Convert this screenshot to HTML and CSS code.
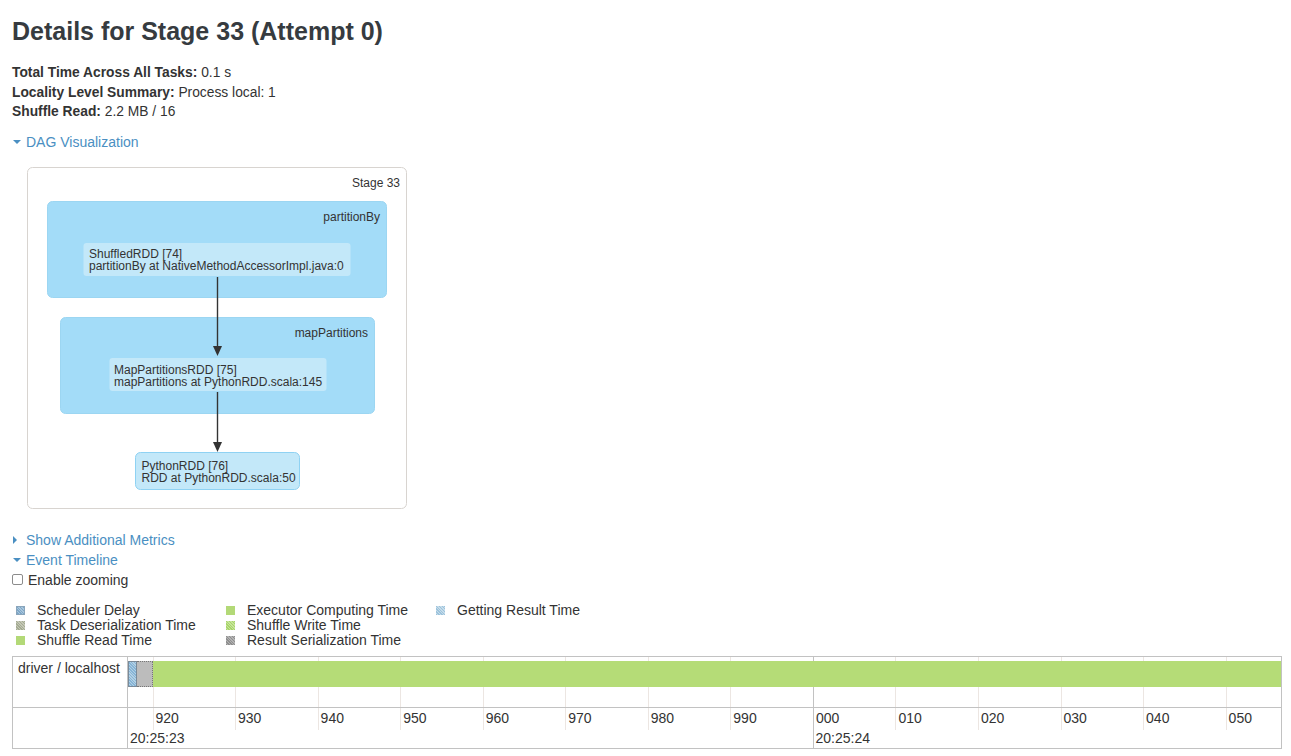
FILE: index.html
```html
<!DOCTYPE html>
<html>
<head>
<meta charset="utf-8">
<title>Stage 33</title>
<link rel="stylesheet" href="styles.css">
</head>
<body>
<h3 class="title">Details for Stage 33 (Attempt 0)</h3>
<ul class="summary">
  <li><strong>Total Time Across All Tasks:</strong> 0.1 s</li>
  <li><strong>Locality Level Summary:</strong> Process local: 1</li>
  <li><strong>Shuffle Read:</strong> 2.2 MB / 16</li>
</ul>
<div class="toggle dag-toggle"><span class="tri-down big"></span><span class="link">DAG Visualization</span></div>
<svg class="dag" width="400" height="360" viewBox="0 0 400 360">
  <rect x="7.5" y="7.5" width="379" height="341" rx="5" fill="#ffffff" stroke="#d8d4d0"/>
  <text x="380" y="27" text-anchor="end">Stage 33</text>
  <rect x="27.5" y="41.5" width="339" height="96" rx="5" fill="#a3dcf8" stroke="#9cd6f2"/>
  <text x="360" y="61" text-anchor="end">partitionBy</text>
  <rect x="63.5" y="83" width="267" height="33" rx="3" fill="#c3e8f9"/>
  <text x="69" y="98">ShuffledRDD [74]</text>
  <text x="69" y="110">partitionBy at NativeMethodAccessorImpl.java:0</text>
  <rect x="40.5" y="157.5" width="314" height="96" rx="5" fill="#a3dcf8" stroke="#9cd6f2"/>
  <text x="348" y="177" text-anchor="end">mapPartitions</text>
  <rect x="89.5" y="198" width="217" height="33" rx="3" fill="#c3e8f9"/>
  <text x="94" y="214">MapPartitionsRDD [75]</text>
  <text x="94" y="226">mapPartitions at PythonRDD.scala:145</text>
  <rect x="115.5" y="292.5" width="164" height="37" rx="5" fill="#c3e8f9" stroke="#8fd2f3"/>
  <text x="121.5" y="310">PythonRDD [76]</text>
  <text x="121.5" y="322">RDD at PythonRDD.scala:50</text>
  <line x1="197.5" y1="117" x2="197.5" y2="188" stroke="#333" stroke-width="1.4"/>
  <path d="M193 186 L202 186 L197.5 196 Z" fill="#333"/>
  <line x1="197.5" y1="232" x2="197.5" y2="284" stroke="#333" stroke-width="1.4"/>
  <path d="M193 282 L202 282 L197.5 292 Z" fill="#333"/>
</svg>
<div class="toggle metrics-toggle"><span class="tri-right"></span><span class="link">Show Additional Metrics</span></div>
<div class="toggle"><span class="tri-down"></span><span class="link">Event Timeline</span></div>
<label class="zoom"><span class="checkbox"></span>Enable zooming</label>
<div class="legend">
  <div class="item"><span class="sw sched"></span>Scheduler Delay</div>
  <div class="item"><span class="sw deser"></span>Task Deserialization Time</div>
  <div class="item"><span class="sw sread"></span>Shuffle Read Time</div>
  <div class="item"><span class="sw exec"></span>Executor Computing Time</div>
  <div class="item"><span class="sw swrite"></span>Shuffle Write Time</div>
  <div class="item"><span class="sw rser"></span>Result Serialization Time</div>
  <div class="item"><span class="sw getres"></span>Getting Result Time</div>
</div>
<div class="timeline">
  <div class="tl-row tl-top">
    <div class="tl-label">driver / localhost</div>
    <div class="tl-area">
      <div class="grid">
        <div class="gc first"></div>
        <div class="gc"></div><div class="gc"></div><div class="gc"></div><div class="gc"></div>
        <div class="gc"></div><div class="gc"></div><div class="gc"></div><div class="gc"></div>
        <div class="gc major"></div><div class="gc"></div><div class="gc"></div><div class="gc"></div>
        <div class="gc"></div>
        <div class="gc last"></div>
      </div>
      <div class="bar"><span class="seg-sched"></span><span class="seg-deser"></span><span class="seg-exec"></span></div>
    </div>
  </div>
  <div class="tl-row tl-axis">
    <div class="tl-label"></div>
    <div class="tl-area">
      <div class="grid minor">
        <div class="gc first"></div>
        <div class="gc">920</div><div class="gc">930</div><div class="gc">940</div><div class="gc">950</div>
        <div class="gc">960</div><div class="gc">970</div><div class="gc">980</div><div class="gc">990</div>
        <div class="gc major">000</div><div class="gc">010</div><div class="gc">020</div><div class="gc">030</div>
        <div class="gc">040</div>
        <div class="gc last">050</div>
      </div>
      <div class="major-row">
        <div class="mj first">20:25:23</div>
        <div class="mj second">20:25:24</div>
      </div>
    </div>
  </div>
</div>
</body>
</html>
```
FILE: styles.css
```css
html, body {
  background: #ffffff;
}
body {
  margin: 0;
  padding: 0 9px 0 12px;
  font-family: "Liberation Sans", Arial, Helvetica, sans-serif;
  font-size: 14px;
  color: #333333;
}
.title {
  margin: 16px 0 0;
  font-size: 25px;
  line-height: 30px;
  font-weight: bold;
  color: #363b40;
}
.summary {
  list-style: none;
  margin: 17px 0 0;
  padding: 0;
  line-height: 19.5px;
  font-size: 13.8px;
}
.summary strong {
  font-weight: bold;
}
.toggle {
  display: flex;
  align-items: center;
  line-height: 20px;
  height: 20px;
}
.dag-toggle {
  margin-top: 10px;
}
.link {
  color: #4a8fc2;
}
.tri-down {
  width: 0;
  height: 0;
  border-left: 4px solid transparent;
  border-right: 4px solid transparent;
  border-top: 4px solid #4a8fc2;
  margin: 1px 5px 0 1px;
}
.tri-down.big {
  border-left-width: 4.5px;
  border-right-width: 4.5px;
  border-top-width: 4.5px;
  margin: 1px 5px 0 1px;
}
.tri-right {
  width: 0;
  height: 0;
  border-top: 4px solid transparent;
  border-bottom: 4px solid transparent;
  border-left: 4px solid #4a8fc2;
  margin: 0 9px 0 1px;
}
.dag {
  display: block;
  margin: 8px 0 0 8px;
}
.dag text {
  font-family: "Liberation Sans", Arial, Helvetica, sans-serif;
  font-size: 12px;
  fill: #333333;
}
.metrics-toggle {
  margin-top: 10px;
}
.zoom {
  display: flex;
  align-items: center;
  height: 20px;
  line-height: 20px;
}
.checkbox {
  display: inline-block;
  width: 9px;
  height: 9px;
  border: 1px solid #8c8c8c;
  border-radius: 2px;
  background: #fff;
  margin-right: 5px;
}
.legend {
  display: grid;
  grid-template-columns: repeat(3, 210px);
  grid-template-rows: repeat(3, 15px);
  grid-auto-flow: column;
  margin-top: 13px;
  padding-left: 4px;
  font-size: 14px;
  line-height: 15px;
}
.legend .item {
  display: flex;
  align-items: center;
  white-space: nowrap;
}
.sw {
  display: inline-block;
  width: 9px;
  height: 9px;
  margin-right: 12px;
}
.sw.sched {
  background: repeating-linear-gradient(45deg, #7ea7c8 0 1px, #a9c6dc 1px 2px);
  outline: 1px solid #8aa5bb;
  outline-offset: -1px;
}
.sw.deser {
  background: repeating-linear-gradient(45deg, #a4ab92 0 1px, #c4c7b6 1px 2px);
}
.sw.sread {
  background: #b3d977;
}
.sw.exec {
  background: #b3d977;
}
.sw.swrite {
  background: repeating-linear-gradient(45deg, #a8d46a 0 1px, #c6e59a 1px 2px);
}
.sw.rser {
  background: repeating-linear-gradient(45deg, #8f8f8f 0 1px, #b3b3b3 1px 2px);
}
.sw.getres {
  background: repeating-linear-gradient(45deg, #9cc3dc 0 1px, #c6dcea 1px 2px);
}
.timeline {
  margin-top: 8px;
  box-sizing: border-box;
  border: 1px solid #c2c2c2;
  font-size: 14px;
  overflow: hidden;
}
.tl-row {
  display: flex;
}
.tl-top {
  height: 50px;
  border-bottom: 1px solid #c2c2c2;
}
.tl-axis {
  height: 40px;
}
.tl-label {
  flex: none;
  width: 115px;
  border-right: 1px solid #c2c2c2;
  padding: 1px 5px;
  line-height: 20px;
  box-sizing: border-box;
  color: #333;
}
.tl-area {
  position: relative;
  flex: 1;
  min-width: 0;
  display: flex;
  flex-direction: column;
}
.grid {
  display: flex;
  height: 100%;
}
.grid.minor {
  height: 22px;
  line-height: 20px;
  color: #333;
}
.gc {
  flex: none;
  width: 82.55px;
  box-sizing: border-box;
  border-left: 1px solid #ece6e2;
  padding-left: 2px;
}
.gc.first {
  width: 24.5px;
  border-left: none;
}
.gc.last {
  flex: 1;
  min-width: 0;
}
.gc.major {
  border-left-color: #c2c2c2;
}
.bar {
  position: absolute;
  top: 4px;
  left: 0;
  right: 0;
  height: 26px;
  display: flex;
}
.seg-sched {
  width: 8.5px;
  box-sizing: border-box;
  border: 1px solid #7a8a99;
  background: repeating-linear-gradient(45deg, #86b4d6 0 1px, #b2d0e4 1px 2px);
}
.seg-deser {
  width: 16px;
  box-sizing: border-box;
  border-top: 1px dotted #777;
  border-bottom: 1px dotted #777;
  border-right: 1px dotted #777;
  background: #bcbcbc;
}
.seg-exec {
  flex: 1;
  background: #b5dc77;
}
.major-row {
  display: flex;
  flex: 1;
  line-height: 17px;
  color: #333;
}
.mj.first {
  width: 684.5px;
  flex: none;
  padding-left: 2px;
  box-sizing: border-box;
}
.mj.second {
  flex: 1;
  border-left: 1px solid #c2c2c2;
  padding-left: 2px;
}
```
